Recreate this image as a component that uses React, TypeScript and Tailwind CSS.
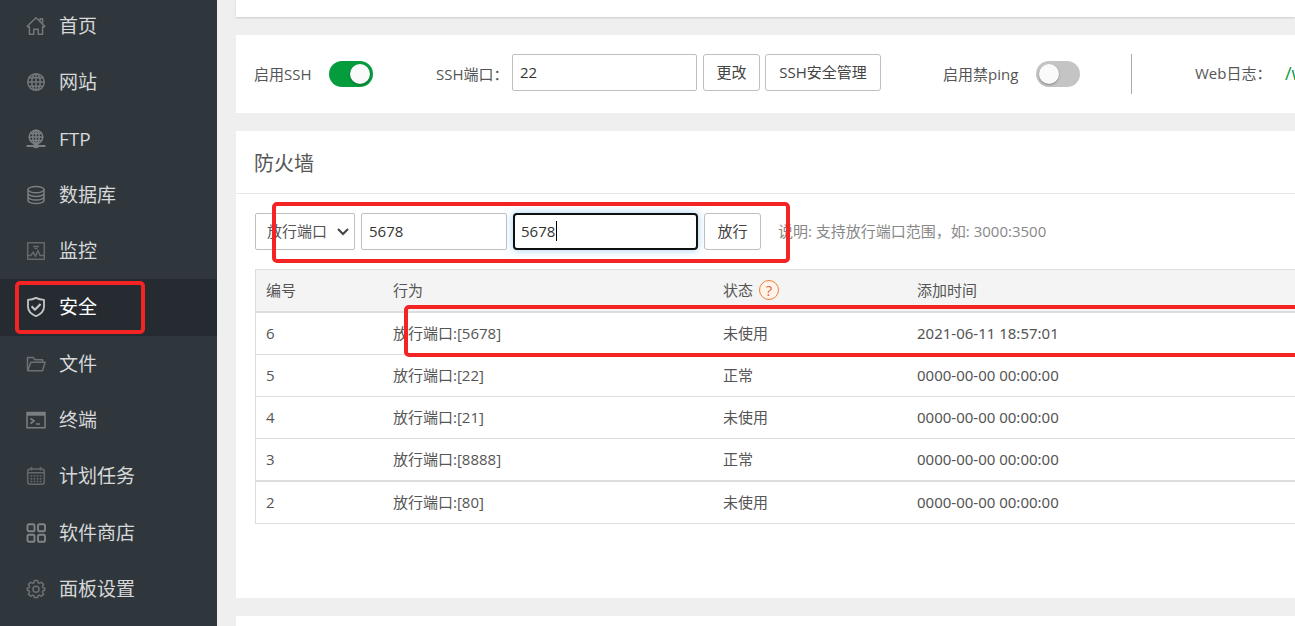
import type { ReactNode } from "react";

type MenuItem = {
  label: string;
  icon: ReactNode;
  tone: string;
  active?: boolean;
};

const menu: MenuItem[] = [
  {
    label: "首页",
    tone: "text-[#72777a]",
    icon: (
      <>
        <path d="M1.2 10.2 10 1.8l8.8 8.4-1.3 1-.9-.7v7.7h-4.4v-5H7.8v5H3.4v-7.7l-.9.7z" />
        <path d="M14 5.4V2.8h2.6v5" />
      </>
    ),
  },
  {
    label: "网站",
    tone: "text-[#72777a]",
    icon: (
      <>
        <circle cx="10" cy="10" r="8.3" />
        <ellipse cx="10" cy="10" rx="4.2" ry="8.3" />
        <path d="M10 1.7v16.6M1.7 10h16.6M3 5.8h14M3 14.2h14" />
      </>
    ),
  },
  {
    label: "FTP",
    tone: "text-[#7a7f82]",
    icon: (
      <>
        <circle cx="10" cy="8" r="6.8" />
        <ellipse cx="10" cy="8" rx="3.2" ry="6.8" />
        <path d="M10 1.2V17M3.2 8h13.6M4.5 4.6h11M4.5 11.4h11" />
        <path d="M.5 17h19" strokeWidth="2" />
        <ellipse cx="10" cy="17" rx="2.4" ry="1.5" fill="currentColor" />
      </>
    ),
  },
  {
    label: "数据库",
    tone: "text-[#7a7f82]",
    icon: (
      <>
        <ellipse cx="10" cy="4.6" rx="8" ry="3.2" />
        <path d="M2 4.6v10.8c0 1.8 3.6 3.2 8 3.2s8-1.4 8-3.2V4.6M2 8.2c0 1.8 3.6 3.2 8 3.2s8-1.4 8-3.2M2 11.8c0 1.8 3.6 3.2 8 3.2s8-1.4 8-3.2" />
      </>
    ),
  },
  {
    label: "监控",
    tone: "text-[#63696c]",
    icon: (
      <>
        <path d="M1.7 1.7h16.6v16.6H1.7z" />
        <path d="M7 5.5h6M8.500 7.500h3M2 14.500h3l2.200-3.500 2.300 4.500 2.500-6 2 5h4" />
      </>
    ),
  },
  {
    label: "安全",
    tone: "text-[#c3c6c8]",
    active: true,
    icon: (
      <>
        <path d="M10 .9c2.300 1.300 5 1.900 8 1.900v7c0 4-3.200 7.300-8 9.400-4.800-2.100-8-5.400-8-9.400v-7c3 0 5.700-.6 8-1.900z" strokeWidth="1.800" />
        <path d="m5.600 9.300 3.300 3.400 5.700-5.800" strokeWidth="2.200" />
      </>
    ),
  },
  {
    label: "文件",
    tone: "text-[#6b7174]",
    icon: (
      <>
        <path d="M1.500 16.500V3.500h5.600L9 5.700h7.600v2.500" />
        <path d="M1.800 16.700 4.800 8.200h14.300l-2.600 8.500z" />
      </>
    ),
  },
  {
    label: "终端",
    tone: "text-[#7a7f82]",
    icon: (
      <>
        <path d="M1 2.500h18v15.300H1z" />
        <path d="M1 4h18" strokeWidth="3.400" />
        <path d="m4.500 8.500 3.600 2.500-3.600 2.500M10 14h4" strokeWidth="1.700" />
      </>
    ),
  },
  {
    label: "计划任务",
    tone: "text-[#63696c]",
    icon: (
      <>
        <rect x="1.700" y="3" width="16.600" height="15.300" rx="2.500" />
        <path d="M2 6.800h16M5.500 1v3.500M14.500 1v3.500" />
        <path d="M4.500 10h11M4.500 12.700h11M4.500 15.400h11" strokeDasharray="1.800 1.300" />
      </>
    ),
  },
  {
    label: "软件商店",
    tone: "text-[#7f8486]",
    icon: (
      <>
        <rect x="1.500" y="1.300" width="7" height="7" rx="1.600" strokeWidth="1.900" />
        <rect x="12" y="1.300" width="7" height="7" rx="1.600" strokeWidth="1.900" />
        <rect x="1.500" y="11.800" width="7" height="7" rx="1.600" strokeWidth="1.900" />
        <rect x="12" y="11.800" width="7" height="7" rx="1.600" strokeWidth="1.900" />
      </>
    ),
  },
  {
    label: "面板设置",
    tone: "text-[#6b7174]",
    icon: (
      <>
        <path d="M8.400 1.500h3.200l.5 2.300 1.300.6 2-1.200 2.200 2.200-1.200 2 .6 1.300 1.700.4v2.200l-1.700.5-.6 1.300 1.200 2-2.200 2.200-2-1.200-1.300.6-.5 1.800H8.400l-.5-1.800-1.300-.6-2 1.200-2.200-2.200 1.200-2-.6-1.300-1.700-.5V9.100L3 8.700l.6-1.300-1.200-2 2.200-2.200 2 1.200 1.300-.6z" />
        <circle cx="10" cy="10.200" r="3" />
      </>
    ),
  },
];

const rules = [
  { id: 6, action: "放行端口:[5678]", status: "未使用", time: "2021-06-11 18:57:01" },
  { id: 5, action: "放行端口:[22]", status: "正常", time: "0000-00-00 00:00:00" },
  { id: 4, action: "放行端口:[21]", status: "未使用", time: "0000-00-00 00:00:00" },
  { id: 3, action: "放行端口:[8888]", status: "正常", time: "0000-00-00 00:00:00" },
  { id: 2, action: "放行端口:[80]", status: "未使用", time: "0000-00-00 00:00:00" },
];

const fieldClass = "h-[37px] shrink-0 rounded-xs border border-[#bfbfbf] bg-white px-[7px] pb-0.5 text-[#333] outline-none";
const buttonClass = "h-[37px] shrink-0 rounded-[3px] border border-[#bfbfbf] bg-white pb-0.5 text-[#444]";

// red marker frame drawn over the content it surrounds
const Marker = ({ className }: { className: string }) => (
  <span className={`pointer-events-none absolute rounded-[5px] border-4 border-[#f42424] ${className}`} />
);

const Switch = ({ id, checked }: { id: string; checked?: boolean }) => (
  <input
    id={id}
    type="checkbox"
    role="switch"
    defaultChecked={checked}
    className="h-[26px] w-11 shrink-0 appearance-none rounded-full bg-[#c4c4c4] p-[3px] before:block before:size-5 before:rounded-full before:bg-[#fafafa] before:shadow-[0_1px_2px_rgba(0,0,0,0.35)] checked:bg-[#049c3c] checked:before:ml-[18px]"
  />
);

const Sidebar = () => (
  <aside className="w-[217px] shrink-0 bg-[#30373c]">
    <nav className="-mt-0.5 flex min-h-[619px] flex-col">
      {menu.map((item) => (
        <a
          key={item.label}
          href="#"
          className={`relative flex flex-1 items-center gap-[13px] pl-[26px] text-[19px] leading-7 ${
            item.active ? "bg-[#262b31] text-white" : "text-[#d6d8d9]"
          }`}
        >
          <svg
            viewBox="0 0 20 20"
            className={`size-5 ${item.tone}`}
            fill="none"
            stroke="currentColor"
            strokeWidth="1.5"
            strokeLinejoin="round"
          >
            {item.icon}
          </svg>
          {item.label}
          {item.active && <Marker className="inset-y-0.5 left-[15px] w-[130px]" />}
        </a>
      ))}
    </nav>
  </aside>
);

const SshCard = () => (
  <section className="flex h-[78px] items-center bg-white pl-[18px] whitespace-nowrap">
    <div className="flex w-[182px] shrink-0 items-center">
      <label htmlFor="ssh" className="w-[75px]">启用SSH</label>
      <Switch id="ssh" checked />
    </div>
    <div className="flex w-[507px] shrink-0 items-center pb-[3px]">
      <label htmlFor="ssh-port" className="w-[76px] shrink-0 pt-0.5">SSH端口：</label>
      <input id="ssh-port" defaultValue="22" className={`${fieldClass} mr-1.5 w-[185px]`} />
      <button className={`${buttonClass} mr-[5px] w-[57px]`}>更改</button>
      <button className={`${buttonClass} w-[116px]`}>SSH安全管理</button>
    </div>
    <div className="flex w-[188px] shrink-0 items-center">
      <label htmlFor="ping" className="w-[93px]">启用禁ping</label>
      <Switch id="ping" />
    </div>
    <div className="flex h-10 shrink-0 items-center border-l border-[#aaa] pb-0.5 pl-[63px]">
      <span className="w-[90px]">Web日志：</span>
      <a href="#" className="text-lg text-[#0f9a3f]">/www</a>
    </div>
  </section>
);

const RuleForm = () => (
  <form className="relative flex items-center whitespace-nowrap">
    <div className="relative mr-1.5 shrink-0">
      <select aria-label="类型" className={`${fieldClass} block w-[100px] appearance-none pl-[11px] text-[#555]`}>
        <option>放行端口</option>
        <option>屏蔽IP</option>
      </select>
      <svg viewBox="0 0 12 8" className="pointer-events-none absolute top-[15px] right-1.5 h-2 w-3 text-[#444]" fill="none" stroke="currentColor" strokeWidth="2">
        <path d="m1 1 5 5 5-5" />
      </svg>
    </div>
    <input aria-label="端口" defaultValue="5678" className={`${fieldClass} mr-1.5 w-[146px]`} />
    <div className="relative mr-1.5 shrink-0">
      <input
        aria-label="备注"
        defaultValue="5678"
        className="block h-[37px] w-[185px] rounded-sm border-2 border-[#101010] bg-white px-1.5 pb-0.5 text-[#333] shadow-[0_0_8px_rgba(102,175,233,0.6)] outline-none"
      />
      <span className="absolute top-2 left-[43px] h-5 w-px bg-black" />
    </div>
    <button type="button" className={`${buttonClass} mr-[17px] w-[57px]`}>放行</button>
    <span className="pb-0.5 text-[#888]">说明: 支持放行端口范围，如: 3000:3500</span>
    <Marker className="-top-[11px] left-[17px] h-[61px] w-[518px]" />
  </form>
);

const RuleTable = () => (
  <div className="relative mt-[19px]">
    <table className="w-full table-fixed border-separate border-spacing-0 border-t border-l border-[#ddd] text-left">
      <thead className="bg-[#f4f4f4]">
        <tr className="h-[43px] *:border-b-2 *:border-[#ddd] *:pb-0.5 *:pl-2.5 *:font-normal">
          <th className="w-[127px]">编号</th>
          <th className="w-[330px]">行为</th>
          <th className="w-[194px]">
            <span className="flex items-center gap-1.5">
              状态
              <a href="#" className="flex size-5 items-center justify-center rounded-full border border-[#e8833a] bg-[#fff3ea] text-[#e06a3a]">
                ?
              </a>
            </span>
          </th>
          <th>添加时间</th>
        </tr>
      </thead>
      <tbody>
        {rules.map((rule) => (
          <tr
            key={rule.id}
            className={`*:border-[#ddd] *:pb-0.5 *:pl-2.5 ${rule.id === 3 ? "h-[43px] *:border-b-2" : "h-[42px] *:border-b"}`}
          >
            <td>{rule.id}</td>
            <td>{rule.action}</td>
            <td>{rule.status}</td>
            <td className="font-['Noto_Sans','Noto_Sans_CJK_SC',sans-serif]">{rule.time}</td>
          </tr>
        ))}
      </tbody>
    </table>
    <Marker className="top-9 -right-4 left-[149px] h-[52px]" />
  </div>
);

export default function App() {
  return (
    <div
      lang="zh-CN"
      className="flex h-screen overflow-hidden bg-[#efefef] font-['Open_Sans','Noto_Sans_CJK_SC',sans-serif] text-[15px] leading-5 text-[#555]"
    >
      <Sidebar />
      <main className="flex min-w-0 flex-1 flex-col gap-[18px] pl-[19px] *:shrink-0">
        <section className="h-[17px] bg-white shadow-[0_1px_2px_rgba(0,0,0,0.15)]" />
        <SshCard />
        <section className="bg-white pb-[74px]">
          <h2 className="flex h-[63px] items-center border-b border-[#e8e8e8] pt-[3px] pl-[18px] text-xl">防火墙</h2>
          <div className="pt-[19px] pl-[19px]">
            <RuleForm />
            <RuleTable />
          </div>
        </section>
        <section className="h-40 bg-white" />
      </main>
    </div>
  );
}
